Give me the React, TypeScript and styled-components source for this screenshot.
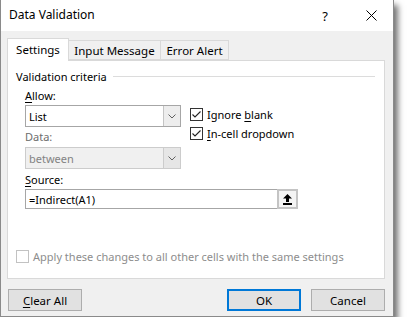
import React from 'react';
import styled, { createGlobalStyle } from 'styled-components';

const GlobalStyle = createGlobalStyle`
  html, body {
    margin: 0;
    padding: 0;
    background: #ffffff;
  }
  body {
    font-family: "Noto Sans", "Open Sans", sans-serif;
    font-size: 11px;
    color: #000;
  }
`;

// Dialog frame
const Dialog = styled.div`
  width: 394px;
  height: 317px;
  box-sizing: border-box;
  border: 1px solid #8a8a8a;
  border-top: none;
  background: #f0f0f0;
  display: flex;
  flex-direction: column;
  box-shadow: 4px 5px 6px rgba(0, 0, 0, 0.55);
`;

const TitleBar = styled.div`
  height: 31px;
  flex-shrink: 0;
  background: #ffffff;
  display: flex;
  align-items: center;
  padding-left: 8px;
`;

const Title = styled.span`
  flex: 1;
  font-size: 12px;
  line-height: 16px;
  margin-top: -1px;
`;

const TitleButton = styled.div<{ $width: number; $left?: number; $right?: number }>`
  width: ${(p) => p.$width}px;
  margin-left: ${(p) => p.$left ?? 0}px;
  margin-right: ${(p) => p.$right ?? 0}px;
  height: 31px;
  display: flex;
  align-items: center;
  justify-content: center;
  font-size: 13px;
`;

const Body = styled.div`
  flex: 1;
  display: flex;
  flex-direction: column;
  padding: 7px 8px 7px 6px;
`;

// Tabs
const TabRow = styled.div`
  height: 22px;
  display: flex;
  align-items: flex-end;
  position: relative;
  z-index: 1;
`;

const Tab = styled.div<{ $active?: boolean; $width: number }>`
  width: ${(p) => p.$width}px;
  height: ${(p) => (p.$active ? 23 : 20)}px;
  margin-bottom: ${(p) => (p.$active ? -1 : 0)}px;
  box-sizing: border-box;
  border: 1px solid #d9d9d9;
  border-bottom: ${(p) => (p.$active ? 'none' : '1px solid #d9d9d9')};
  border-left: ${(p) => (p.$active ? '1px solid #d9d9d9' : 'none')};
  background: ${(p) => (p.$active ? '#ffffff' : '#f0f0f0')};
  display: flex;
  align-items: center;
  justify-content: center;
  padding-bottom: ${(p) => (p.$active ? 2 : 0)}px;
  font-size: 11.5px;
`;

const Panel = styled.div`
  height: 219px;
  box-sizing: border-box;
  background: #ffffff;
  border: 1px solid #d9d9d9;
  padding: 7px 8px 9px 8px;
  display: flex;
  flex-direction: column;
`;

const GroupHeader = styled.div`
  display: flex;
  align-items: center;
  height: 16px;
  gap: 6px;

  &::after {
    content: '';
    flex: 1;
    height: 1px;
    background: #dcdcdc;
    margin-right: 1px;
  }
`;

const GroupBody = styled.div`
  padding-left: 9px;
  display: flex;
  flex-direction: column;
`;

const TopArea = styled.div`
  display: flex;
  gap: 9px;
`;

const FieldColumn = styled.div`
  width: 156px;
  display: flex;
  flex-direction: column;
`;

const Label = styled.div<{ $disabled?: boolean; $top: number }>`
  height: 16px;
  line-height: 16px;
  margin-top: ${(p) => p.$top}px;
  color: ${(p) => (p.$disabled ? '#6d6d6d' : '#000')};
`;

const Key = styled.span`
  text-decoration: underline;
  text-underline-offset: 2px;
`;

const Combo = styled.div<{ $disabled?: boolean; $top: number }>`
  height: 22px;
  margin-top: ${(p) => p.$top}px;
  box-sizing: border-box;
  border: 1px solid ${(p) => (p.$disabled ? '#cccccc' : '#a6a6a6')};
  background: ${(p) => (p.$disabled ? '#f0f0f0' : '#ffffff')};
  color: ${(p) => (p.$disabled ? '#838383' : '#000')};
  display: flex;
`;

const ComboText = styled.div`
  flex: 1;
  display: flex;
  align-items: center;
  padding-left: 3px;
`;

const ComboButton = styled.div<{ $disabled?: boolean }>`
  width: 16px;
  border-left: 1px solid ${(p) => (p.$disabled ? '#cccccc' : '#c4c4c4')};
  background: ${(p) => (p.$disabled ? '#e6e6e6' : '#ededed')};
  display: flex;
  align-items: center;
  justify-content: center;
`;

const CheckColumn = styled.div`
  display: flex;
  flex-direction: column;
  padding-top: 2px;
`;

const CheckSpacer = styled.div`
  height: 22px;
`;

const CheckRow = styled.label<{ $disabled?: boolean }>`
  height: 19px;
  display: flex;
  align-items: flex-start;
  gap: 4px;
  color: ${(p) => (p.$disabled ? '#8d8d8d' : '#000')};
  line-height: 13px;
`;

const Box = styled.span<{ $disabled?: boolean }>`
  width: 13px;
  height: 13px;
  box-sizing: border-box;
  border: 1px solid ${(p) => (p.$disabled ? '#c2c2c2' : '#333333')};
  background: #ffffff;
  display: flex;
  align-items: center;
  justify-content: center;
  flex-shrink: 0;
`;

const SourceRow = styled.div`
  margin-top: 1px;
  width: 273px;
  height: 20px;
  display: flex;
`;

const SourceInput = styled.div`
  flex: 1;
  box-sizing: border-box;
  border: 1px solid #a6a6a6;
  border-right: none;
  display: flex;
  align-items: center;
  padding-left: 3px;
`;

const RefButton = styled.div`
  width: 21px;
  box-sizing: border-box;
  border: 2px solid #c4c4c4;
  background: #f4f4f4;
  display: flex;
  align-items: center;
  justify-content: center;
`;

const ApplyRow = styled.div`
  margin-top: auto;
`;

const Footer = styled.div`
  margin-top: 10px;
  display: flex;
  padding-left: 1px;
`;

const Button = styled.div<{ $default?: boolean }>`
  width: 74px;
  height: 22px;
  box-sizing: border-box;
  border: ${(p) => (p.$default ? '2px solid #0078d7' : '1px solid #adadad')};
  background: #e1e1e1;
  display: flex;
  align-items: center;
  justify-content: center;
  font-size: 11.5px;
`;

const Spacer = styled.div`
  flex: 1;
`;

const ButtonGap = styled.div`
  width: 10px;
`;

const Chevron = () => (
  <svg width="8" height="5" viewBox="0 0 8 5">
    <polyline points="0.5,0.5 4,4 7.5,0.5" fill="none" stroke="#606060" strokeWidth="1" />
  </svg>
);

const Check = () => (
  <svg width="11" height="11" viewBox="0 0 11 11">
    <polyline points="1.5,5.5 4,8 9.5,2.5" fill="none" stroke="#222" strokeWidth="1.1" />
  </svg>
);

const CloseIcon = () => (
  <svg width="11" height="11" viewBox="0 0 11 11">
    <path d="M0.5 0.5 L10.5 10.5 M10.5 0.5 L0.5 10.5" stroke="#000" strokeWidth="1" />
  </svg>
);

const CollapseIcon = () => (
  <svg width="9" height="11" viewBox="0 0 9 11">
    <path d="M4.5 0 L9 4.5 L6 4.5 L6 8 L3 8 L3 4.5 L0 4.5 Z" fill="#000" />
    <rect x="0" y="9" width="9" height="2" fill="#000" />
  </svg>
);

const App = () => {
  return (
    <>
      <GlobalStyle />
      <Dialog>
        <TitleBar>
          <Title>Data Validation</Title>
          <TitleButton $width={14}>?</TitleButton>
          <TitleButton $width={20} $left={29} $right={12}>
            <CloseIcon />
          </TitleButton>
        </TitleBar>
        <Body>
          <TabRow>
            <Tab $active $width={62}>Settings</Tab>
            <Tab $width={92}>Input Message</Tab>
            <Tab $width={68}>Error Alert</Tab>
          </TabRow>
          <Panel>
            <GroupHeader>Validation criteria</GroupHeader>
            <GroupBody>
              <TopArea>
                <FieldColumn>
                  <Label $top={4}>
                    <Key>A</Key>llow:
                  </Label>
                  <Combo $top={1}>
                    <ComboText>List</ComboText>
                    <ComboButton>
                      <Chevron />
                    </ComboButton>
                  </Combo>
                  <Label $top={2} $disabled>
                    Data:
                  </Label>
                  <Combo $top={2} $disabled>
                    <ComboText>between</ComboText>
                    <ComboButton $disabled>
                      <Chevron />
                    </ComboButton>
                  </Combo>
                </FieldColumn>
                <CheckColumn>
                  <CheckSpacer />
                  <CheckRow>
                    <Box>
                      <Check />
                    </Box>
                    <span>
                      Ignore <Key>b</Key>lank
                    </span>
                  </CheckRow>
                  <CheckRow>
                    <Box>
                      <Check />
                    </Box>
                    <span>
                      <Key>I</Key>n-cell dropdown
                    </span>
                  </CheckRow>
                </CheckColumn>
              </TopArea>
              <Label $top={3}>
                <Key>S</Key>ource:
              </Label>
              <SourceRow>
                <SourceInput>=Indirect(A1)</SourceInput>
                <RefButton>
                  <CollapseIcon />
                </RefButton>
              </SourceRow>
            </GroupBody>
            <ApplyRow>
              <CheckRow $disabled>
                <Box $disabled />
                <span>Apply these changes to all other cells with the same settings</span>
              </CheckRow>
            </ApplyRow>
          </Panel>
          <Footer>
            <Button>
              <span>
                <Key>C</Key>lear All
              </span>
            </Button>
            <Spacer />
            <Button $default>OK</Button>
            <ButtonGap />
            <Button>Cancel</Button>
          </Footer>
        </Body>
      </Dialog>
    </>
  );
};

export default App;
